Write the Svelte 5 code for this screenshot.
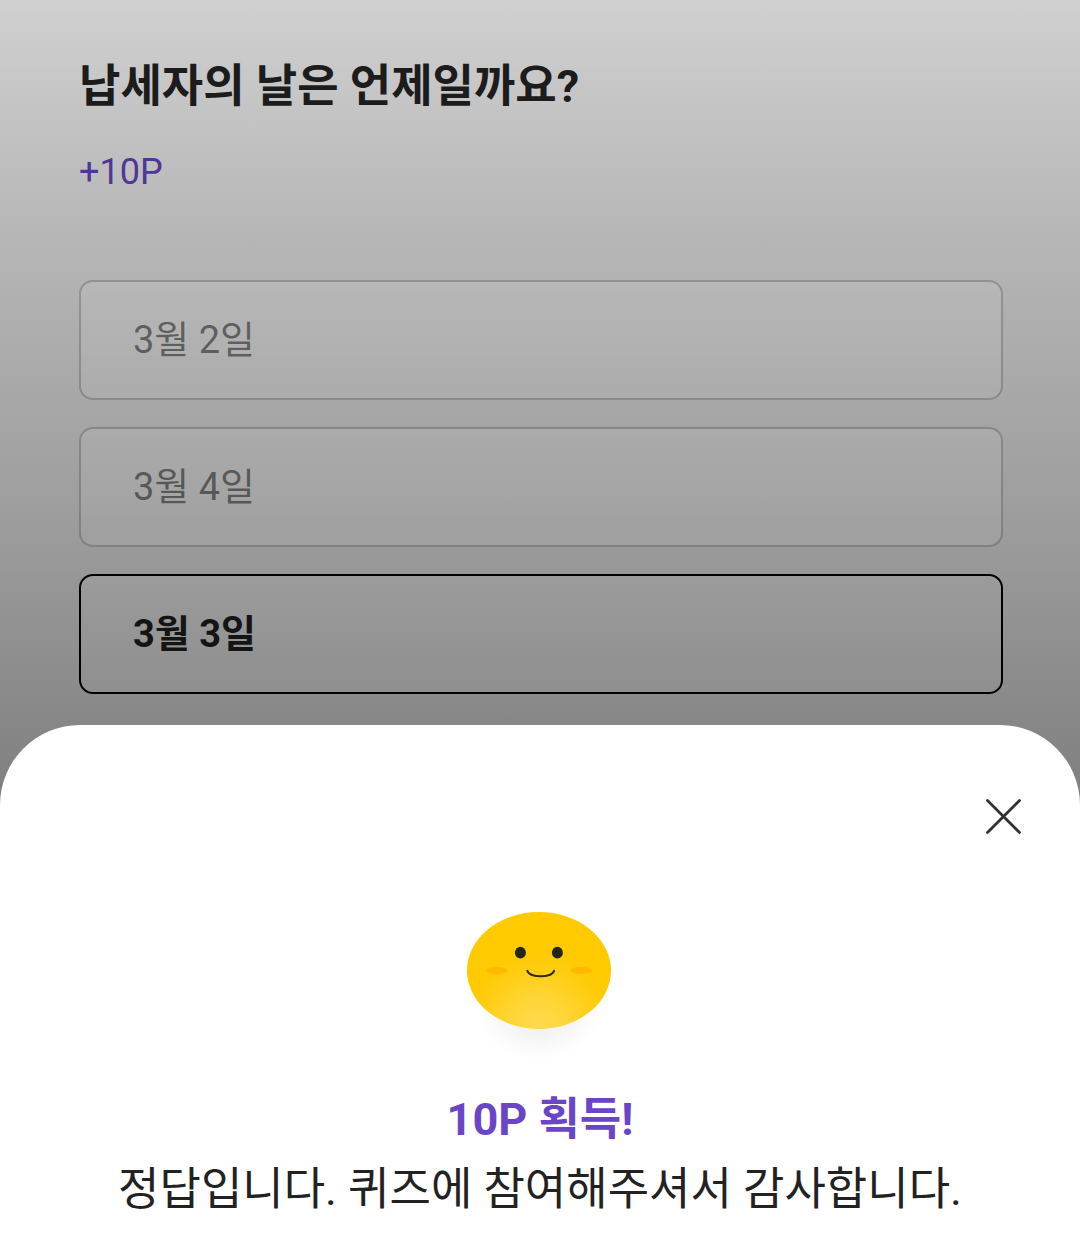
<script lang="ts">
  const options = ['3월 2일', '3월 4일', '3월 3일'];
  let selected = $state('3월 3일');
  let open = $state(true);
</script>

<div class="screen">
  <main class="quiz">
    <h1>납세자의 날은 언제일까요?</h1>
    <p class="points">+10P</p>
    <div class="options">
      {#each options as option}
        <button
          type="button"
          class="option"
          class:selected={selected === option}
          aria-pressed={selected === option}
          onclick={() => (selected = option)}>{option}</button>
      {/each}
    </div>
  </main>

  {#if open}
    <div class="sheet" role="dialog" aria-labelledby="result-title">
      <button type="button" class="close" aria-label="닫기" onclick={() => (open = false)}>
        <svg viewBox="0 0 36 36" width="36" height="36" aria-hidden="true">
          <path d="M2.5 1.5 34.5 33.5M34.5 1.5 2.5 33.5" fill="none" stroke="#303032" stroke-width="2.7" stroke-linecap="round" />
        </svg>
      </button>
      <svg class="face" viewBox="0 0 200 160" width="200" height="160" aria-hidden="true">
        <defs>
          <radialGradient id="glow" gradientUnits="userSpaceOnUse" cx="99" cy="126" r="76">
            <stop offset="0" stop-color="#ffda50" />
            <stop offset="0.4" stop-color="#ffd534" />
            <stop offset="0.75" stop-color="#ffcd12" />
            <stop offset="1" stop-color="#ffca00" />
          </radialGradient>
          <radialGradient id="shade">
            <stop offset="0" stop-color="#ececec" />
            <stop offset="0.5" stop-color="#f5f5f5" />
            <stop offset="0.75" stop-color="#fbfbfb" />
            <stop offset="1" stop-color="#ffffff" />
          </radialGradient>
        </defs>
        <ellipse cx="99" cy="116" rx="62" ry="44" fill="url(#shade)" />
        <ellipse cx="99" cy="70.5" rx="72" ry="58.5" fill="url(#glow)" />
        <ellipse cx="57" cy="70.5" rx="10.5" ry="3.7" fill="#ffb900" />
        <ellipse cx="141" cy="70.5" rx="10.8" ry="3.7" fill="#ffb900" />
        <ellipse cx="80.4" cy="52.7" rx="5.5" ry="5.9" fill="#24241a" />
        <ellipse cx="117.4" cy="52.7" rx="5.5" ry="5.9" fill="#24241a" />
        <path d="M87.3 70.8c2 7.4 25 7.4 26.8 0" fill="none" stroke="#2e2a12" stroke-width="2" stroke-linecap="round" />
      </svg>
      <h2 id="result-title">10P 획득!</h2>
      <p class="message">정답입니다. 퀴즈에 참여해주셔서 감사합니다.</p>
    </div>
  {/if}
</div>

<style>
  :global(body) {
    margin: 0;
  }

  .screen {
    display: flex;
    flex-direction: column;
    min-height: 100vh;
    box-sizing: border-box;
    background: linear-gradient(#d0d0d0 0, #b3b3b3 270px, #999 560px, #808080 790px);
    font-family: Roboto, "Noto Sans CJK KR", sans-serif;
    color: #1c1c1c;
  }

  h1,
  h2,
  p {
    margin: 0;
  }

  .quiz {
    padding: 52px 77px 31px 79px;
  }

  h1,
  h2,
  .message {
    font-size: 45px;
    line-height: 70px;
  }

  h1 {
    font-weight: 700;
  }

  .points {
    margin-top: 25px;
    font-size: 36px;
    line-height: 50px;
    color: #4f3795;
  }

  .options {
    display: flex;
    flex-direction: column;
    gap: 27px;
    margin-top: 83px;
  }

  .option {
    box-sizing: border-box;
    width: 100%;
    height: 120px;
    padding: 0 52px;
    border: 2px solid rgb(0 0 0 / 20%);
    border-radius: 14px;
    background: linear-gradient(rgb(255 255 255 / 8%), rgb(255 255 255 / 5%));
    font: inherit;
    font-size: 38px;
    line-height: 60px;
    text-align: left;
    color: rgb(0 0 0 / 48%);
    cursor: pointer;
  }

  .option.selected {
    border-color: #000;
    background: linear-gradient(rgb(255 255 255 / 4%), rgb(255 255 255 / 4%));
    font-weight: 700;
    color: #141414;
  }

  .sheet {
    display: flex;
    flex: 1;
    flex-direction: column;
    align-items: center;
    padding: 65px 50px 30px;
    border-radius: 80px 80px 0 0;
    background: #fff;
  }

  .close {
    display: flex;
    align-self: flex-end;
    padding: 9px;
    border: 0;
    background: none;
    cursor: pointer;
  }

  .face {
    margin-top: 56px;
  }

  h2 {
    margin-top: 25px;
    font-weight: 700;
    color: #6a45c8;
  }

  .message {
    text-align: center;
    color: #222;
  }
</style>
